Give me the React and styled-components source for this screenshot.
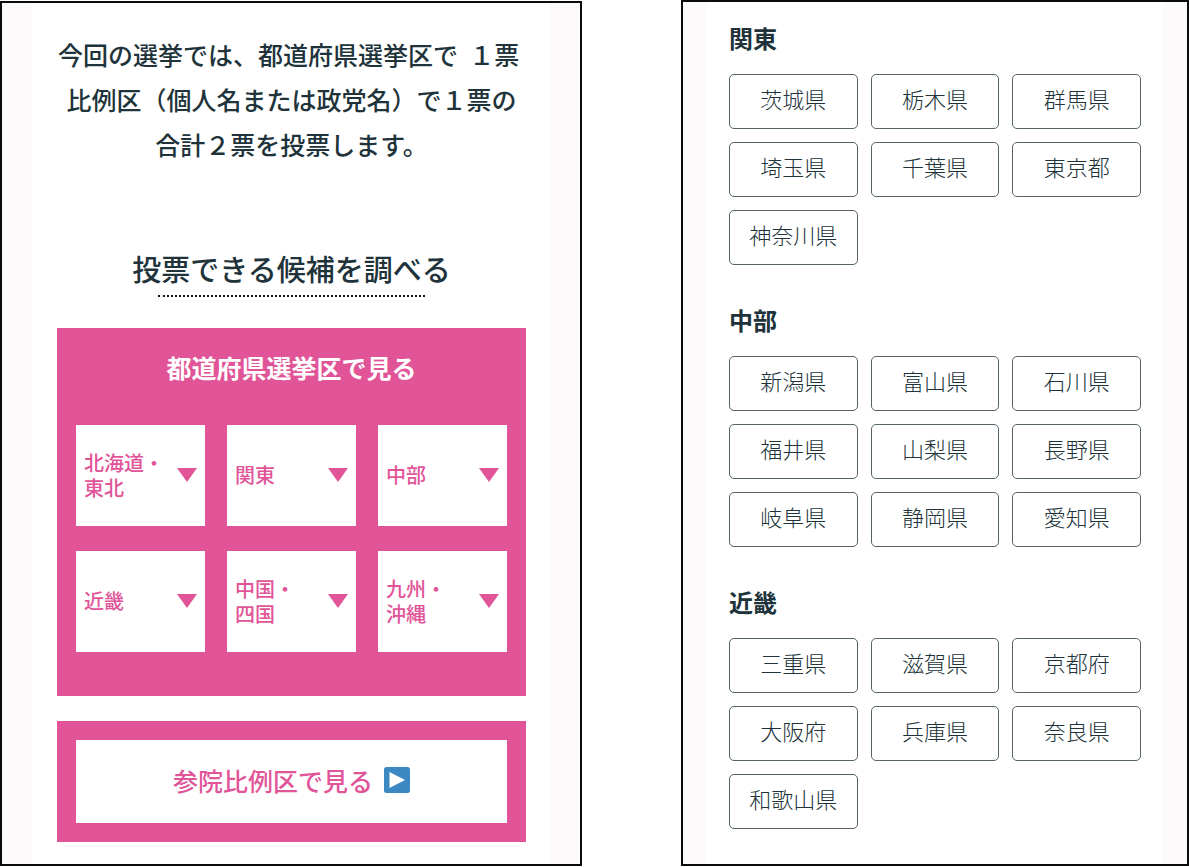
/** @format */

import React from 'react';
import styled, { createGlobalStyle } from 'styled-components';

const PINK = '#e15498';
const INK = '#21333a';

const GlobalStyle = createGlobalStyle`
  * {
    box-sizing: border-box;
  }

  body {
    margin: 0;
    background: #fff;
    color: ${INK};
    font-family: 'Noto Sans CJK JP', sans-serif;
  }

  h1, h2, h3, p {
    margin: 0;
  }

  button {
    font-family: inherit;
    cursor: pointer;
  }
`;

const Page = styled.main`
  display: grid;
  grid-template-columns: 582fr 508fr;
  column-gap: 99px;
  align-items: start;
`;

const Frame = styled.section`
  border: 2px solid #0b0b0b;
  background: #fcfafb;
  padding: 0 ${({ $gutter }) => $gutter}px;
  margin-top: ${({ $top = 0 }) => $top}px;
`;

const Sheet = styled.div`
  background: #fff;
  padding: ${({ $padding }) => $padding};
`;

const Lead = styled.p`
  font-size: 25px;
  font-weight: 500;
  line-height: 45px;
  text-align: center;
  white-space: pre;
`;

const Title = styled.h1`
  margin-top: 77px;
  font-size: 29px;
  font-weight: 500;
  line-height: 48px;
  text-align: center;

  &::after {
    content: '';
    display: block;
    width: 57%;
    margin: 3px auto 0;
    border-bottom: 2px dotted #111;
  }
`;

const Panel = styled.section`
  margin-top: ${({ $top }) => $top}px;
  padding: ${({ $padding }) => $padding};
  background: ${PINK};
`;

const PanelTitle = styled.h2`
  color: #fff;
  font-size: 25px;
  font-weight: 700;
  line-height: 38px;
  text-align: center;
`;

const AreaGrid = styled.div`
  display: grid;
  grid-template-columns: repeat(3, 1fr);
  gap: 25px 22px;
  margin-top: 39px;
`;

const AreaButton = styled.button`
  display: flex;
  align-items: center;
  justify-content: space-between;
  min-height: 101px;
  padding: 0 8px 2px;
  border: 0;
  background: #fff;
  color: ${PINK};
  font-size: 20px;
  font-weight: 500;
  line-height: 25px;
  text-align: left;
  white-space: pre-line;
`;

const Caret = styled.span`
  flex: none;
  border: 10px solid transparent;
  border-top: 14px solid ${PINK};
  border-bottom: 0;
`;

const ProportionalLink = styled.a`
  display: flex;
  align-items: center;
  justify-content: center;
  gap: 11px;
  min-height: 83px;
  padding-bottom: 4px;
  background: #fff;
  color: ${PINK};
  font-size: 25px;
  font-weight: 500;
  line-height: 40px;
  text-decoration: none;
`;

const Region = styled.section`
  & + & {
    margin-top: 35px;
  }
`;

const RegionTitle = styled.h3`
  font-size: 24px;
  font-weight: 700;
  line-height: 40px;
`;

const PrefectureGrid = styled.div`
  display: grid;
  grid-template-columns: repeat(3, 1fr);
  gap: 13px;
  margin-top: 16px;
`;

const PrefectureButton = styled.button`
  height: 55px;
  padding: 0 0 7px;
  border: 1px solid #56646a;
  border-radius: 5px;
  background: #fff;
  color: ${INK};
  font-size: 22px;
  font-weight: 300;
  line-height: 32px;
  white-space: nowrap;
`;

const areas = [
  '北海道・\n東北',
  '関東',
  '中部',
  '近畿',
  '中国・\n四国',
  '九州・\n沖縄',
];

const regions = [
  {
    name: '関東',
    prefectures: ['茨城県', '栃木県', '群馬県', '埼玉県', '千葉県', '東京都', '神奈川県'],
  },
  {
    name: '中部',
    prefectures: [
      '新潟県',
      '富山県',
      '石川県',
      '福井県',
      '山梨県',
      '長野県',
      '岐阜県',
      '静岡県',
      '愛知県',
    ],
  },
  {
    name: '近畿',
    prefectures: ['三重県', '滋賀県', '京都府', '大阪府', '兵庫県', '奈良県', '和歌山県'],
  },
];

function PlayIcon() {
  return (
    <svg width="26" height="26" viewBox="0 0 26 26" aria-hidden="true">
      <rect width="26" height="26" rx="2.5" fill="#3b88c3" />
      <path d="M5.5 5v16L21 13z" fill="#fff" />
    </svg>
  );
}

function SearchPanel() {
  return (
    <Frame $gutter={30} $top={1}>
      <Sheet $padding="29px 24px 22px 25px">
        <Lead>
          {'今回の選挙では、都道府県選挙区で  １票 \n比例区（個人名または政党名）で１票の\n合計２票を投票します。'}
        </Lead>
        <Title>投票できる候補を調べる</Title>
        <Panel $top={31} $padding="20px 19px 44px">
          <PanelTitle>都道府県選挙区で見る</PanelTitle>
          <AreaGrid>
            {areas.map((area) => (
              <AreaButton key={area} type="button">
                {area}
                <Caret />
              </AreaButton>
            ))}
          </AreaGrid>
        </Panel>
        <Panel $top={25} $padding="19px">
          <ProportionalLink href="#proportional">
            参院比例区で見る
            <PlayIcon />
          </ProportionalLink>
        </Panel>
      </Sheet>
    </Frame>
  );
}

function PrefectureList() {
  return (
    <Frame $gutter={24}>
      <Sheet $padding="16px 22px 35px">
        {regions.map(({ name, prefectures }) => (
          <Region key={name}>
            <RegionTitle>{name}</RegionTitle>
            <PrefectureGrid>
              {prefectures.map((prefecture) => (
                <PrefectureButton key={prefecture} type="button">
                  {prefecture}
                </PrefectureButton>
              ))}
            </PrefectureGrid>
          </Region>
        ))}
      </Sheet>
    </Frame>
  );
}

export default function App() {
  return (
    <>
      <GlobalStyle />
      <Page>
        <SearchPanel />
        <PrefectureList />
      </Page>
    </>
  );
}
